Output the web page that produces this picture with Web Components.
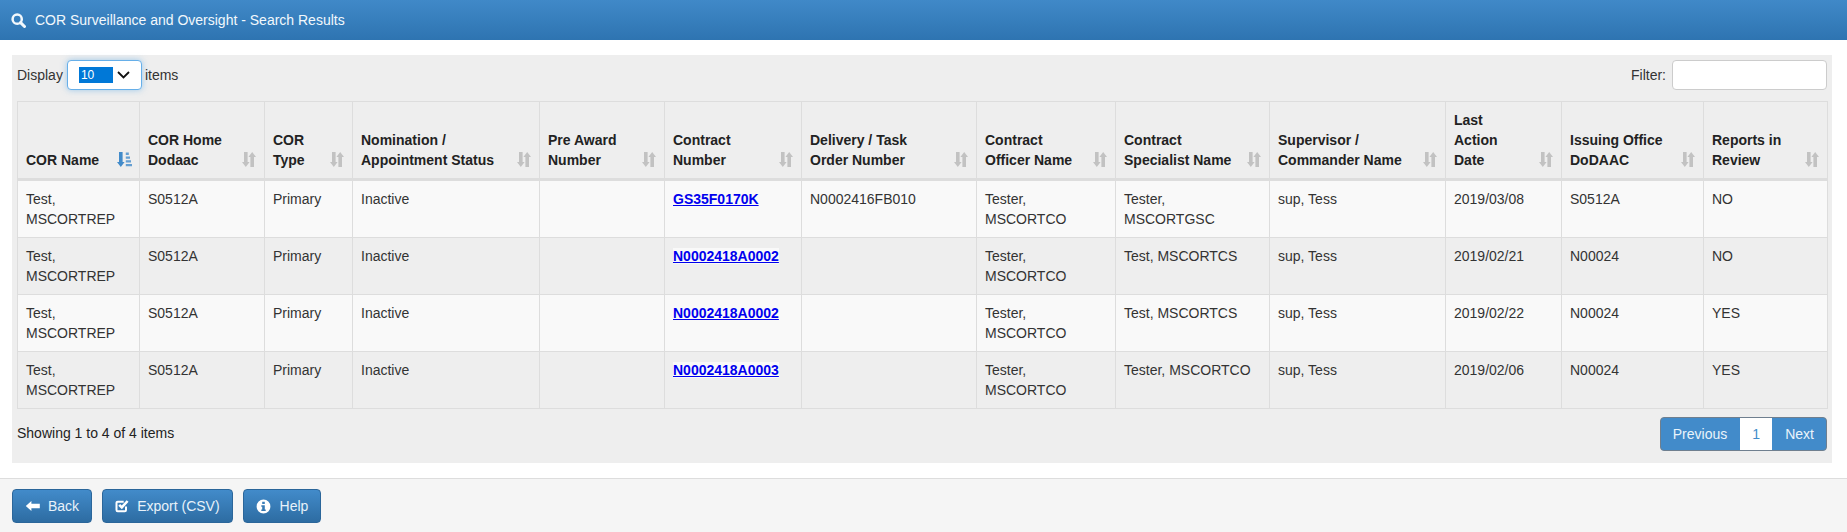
<!DOCTYPE html>
<html lang="en">
<head>
<meta charset="UTF-8">
<title>COR Surveillance and Oversight - Search Results</title>
<style>
  html, body { margin: 0; padding: 0; background: #fff; }
  body { font: 14px/20px "Liberation Sans", Arial, sans-serif; color: #222; width: 1847px; height: 532px; overflow: hidden; }
</style>
</head>
<body>
<title-bar>COR Surveillance and Oversight - Search Results</title-bar>
<results-panel></results-panel>
<action-bar>
  <action-button icon="back">Back</action-button>
  <action-button icon="check">Export (CSV)</action-button>
  <action-button icon="info">Help</action-button>
</action-bar>

<script>
const ICONS = {
  search: '<svg width="15" height="15" viewBox="0 0 15 15"><circle cx="6.2" cy="6.2" r="4.6" fill="none" stroke="currentColor" stroke-width="2.5"/><path d="M9.6 9.6l3.9 3.9" stroke="currentColor" stroke-width="3" stroke-linecap="round"/></svg>',
  back: '<svg width="15" height="14" viewBox="0 0 15 14"><path d="M6.4 2L.8 7l5.6 5V9.2H14.8V4.8H6.4z" fill="currentColor"/></svg>',
  check: '<svg width="14" height="14" viewBox="0 0 14 14"><path d="M11 7.6V11a1.2 1.2 0 0 1-1.2 1.2H2.7A1.2 1.2 0 0 1 1.5 11V3.9a1.2 1.2 0 0 1 1.2-1.2h6" fill="none" stroke="currentColor" stroke-width="2"/><path d="M4.2 5.8l2.6 2.6L12.6 2" fill="none" stroke="currentColor" stroke-width="2.6"/></svg>',
  info: '<svg width="15" height="15" viewBox="0 0 15 15"><path fill="currentColor" fill-rule="evenodd" d="M7.5.6a6.9 6.9 0 1 1 0 13.8a6.9 6.9 0 0 1 0-13.8zM6.2 2.8v2.3h2.6V2.8zM5.3 6.2v1.5h.9v2.9H5.3V12h4.4v-1.4h-.9V6.2z"/></svg>',
  sortBoth: '<svg width="14" height="15" viewBox="0 0 14 15"><path d="M2 0h3.6v10h2L3.8 15 0 10h2z" fill="currentColor"/><path d="M8.4 15V5h-2L10.2 0 14 5h-2v10z" fill="currentColor"/></svg>',
  sortAsc: '<svg width="15" height="15" viewBox="0 0 15 15"><path d="M2 0h3.6v10h2L3.8 15 0 10h2z" fill="currentColor"/><path d="M8.8.6h3v2.3h-3zM8.8 4.4h4.2v2.3H8.8zM8.8 8.2h5.2v2.3H8.8zM8.8 12H15v2.3H8.8z" fill="currentColor" opacity=".8"/></svg>'
};

class TitleBar extends HTMLElement {
  constructor() {
    super();
    this.attachShadow({mode: 'open'}).innerHTML = `
      <style>
        :host { display: flex; align-items: center; gap: 9px; height: 40px; padding: 0 11px; box-sizing: border-box;
          background: linear-gradient(#4089c8, #2e74b1); color: #f2f8fc; }
      </style>
      ${ICONS.search}<slot></slot>`;
  }
}
customElements.define('title-bar', TitleBar);

class SortIcon extends HTMLElement {
  constructor() {
    super();
    this.attachShadow({mode: 'open'});
  }
  connectedCallback() {
    const active = this.hasAttribute('active');
    this.shadowRoot.innerHTML = `
      <style>
        :host { display: block; flex: none; height: 15px; color: ${active ? '#428bca' : '#c2c2c2'}; margin: 0 ${active ? '-1px' : '0'} 3px 0; }
        svg { display: block; }
      </style>
      ${active ? ICONS.sortAsc : ICONS.sortBoth}`;
  }
}
customElements.define('sort-icon', SortIcon);

class ResultsTable extends HTMLElement {
  constructor() {
    super();
    this.attachShadow({mode: 'open'});
    this.columns = [
      ['COR Name', 122], ['COR Home<br>Dodaac', 125], ['COR<br>Type', 88], ['Nomination /<br>Appointment Status', 187],
      ['Pre Award<br>Number', 125], ['Contract<br>Number', 137], ['Delivery / Task<br>Order Number', 175],
      ['Contract<br>Officer Name', 139], ['Contract<br>Specialist Name', 154], ['Supervisor /<br>Commander Name', 176],
      ['Last<br>Action<br>Date', 116], ['Issuing Office<br>DoDAAC', 142], ['Reports in<br>Review', 124]
    ];
    const rep = 'Test, MSCORTREP', co = 'Tester, MSCORTCO';
    this.rows = [
      [rep, 'S0512A', 'Primary', 'Inactive', '', 'GS35F0170K', 'N0002416FB010', co, 'Tester,<br>MSCORTGSC', 'sup, Tess', '2019/03/08', 'S0512A', 'NO'],
      [rep, 'S0512A', 'Primary', 'Inactive', '', 'N0002418A0002', '', co, 'Test, MSCORTCS', 'sup, Tess', '2019/02/21', 'N00024', 'NO'],
      [rep, 'S0512A', 'Primary', 'Inactive', '', 'N0002418A0002', '', co, 'Test, MSCORTCS', 'sup, Tess', '2019/02/22', 'N00024', 'YES'],
      [rep, 'S0512A', 'Primary', 'Inactive', '', 'N0002418A0003', '', co, 'Tester, MSCORTCO', 'sup, Tess', '2019/02/06', 'N00024', 'YES']
    ];
  }
  connectedCallback() {
    const cols = this.columns.map(c => `<col style="width:${c[1]}px">`).join('');
    const head = this.columns.map((c, i) => `
      <th><div class="th"><span>${c[0]}</span><sort-icon ${i === 0 ? 'active' : ''}></sort-icon></div></th>`).join('');
    const body = this.rows.map(r => `<tr>${r.map((v, i) =>
      `<td>${i === 5 ? `<a href="#">${v}</a>` : v}</td>`).join('')}</tr>`).join('');
    this.shadowRoot.innerHTML = `
      <style>
        :host { display: block; }
        table { border-collapse: collapse; table-layout: fixed; width: 1810px; }
        th, td { border: 1px solid #ddd; padding: 8px; vertical-align: top; text-align: left; font-size: 14px; line-height: 20px; }
        th { vertical-align: bottom; border-bottom: 3px solid #ddd; background: #eee; color: #222; height: 60px; }
        .th { display: flex; justify-content: space-between; align-items: flex-end; white-space: nowrap; }
        td { height: 40px; }
        tr:nth-child(odd) td { background: #f9f9f9; }
        tr:nth-child(even) td { background: #eee; }
        a { color: #0000ee; font-weight: bold; text-decoration: underline; background: #f9f9f9; }
      </style>
      <table>
        <colgroup>${cols}</colgroup>
        <thead><tr>${head}</tr></thead>
        <tbody>${body}</tbody>
      </table>`;
  }
}
customElements.define('results-table', ResultsTable);

class PageNav extends HTMLElement {
  constructor() {
    super();
    this.attachShadow({mode: 'open'}).innerHTML = `
      <style>
        :host { display: flex; height: 34px; box-sizing: border-box; border: 1px solid #6f7f8f; border-radius: 4px; overflow: hidden; background: #428bca; color: #eaf4fb; }
        span { padding: 0 12px; line-height: 32px; }
        .prev { padding-right: 13px; }
        .next { padding-left: 13px; }
        .cur { width: 32px; box-sizing: border-box; padding: 0; text-align: center; background: #fff; color: #428bca; }
      </style>
      <span class="prev">Previous</span><span class="cur">1</span><span class="next">Next</span>`;
  }
}
customElements.define('page-nav', PageNav);

class ResultsPanel extends HTMLElement {
  constructor() {
    super();
    this.attachShadow({mode: 'open'}).innerHTML = `
      <style>
        :host { display: block; margin: 15px 15px 0 12px; height: 408px; padding: 5px 5px 0; box-sizing: border-box; background: #eee; color: #333; }
        .top { display: flex; align-items: center; justify-content: space-between; height: 30px; margin-bottom: 11px; }
        .group { display: flex; align-items: center; gap: 4px; }
        .select { display: flex; align-items: center; gap: 4px; width: 75px; height: 30px; padding: 0 0 0 11px; box-sizing: border-box; margin-right: -1px;
          background: #fff; border: 1px solid #66afe9; border-radius: 4px; box-shadow: 0 0 6px rgba(102,175,233,.6); }
        .select b { display: block; width: 34px; height: 16px; padding-left: 2px; box-sizing: border-box; background: #0078d7; color: #fff; font: 12px/16px "Liberation Sans", Arial, sans-serif; }
        .filter { width: 155px; height: 30px; margin-left: 2px; box-sizing: border-box; background: #fff; border: 1px solid #ccc; border-radius: 4px; }
        .bottom { display: flex; justify-content: space-between; margin-top: 8px; }
        .info { padding-top: 6px; color: #222; }
      </style>
      <div class="top">
        <div class="group">Display
          <div class="select"><b>10</b><svg width="13" height="8" viewBox="0 0 13 8"><path d="M1 1l5.5 5.5L12 1" fill="none" stroke="#111" stroke-width="1.8"/></svg></div>
          items</div>
        <div class="group">Filter: <div class="filter"></div></div>
      </div>
      <results-table></results-table>
      <div class="bottom">
        <div class="info">Showing 1 to 4 of 4 items</div>
        <page-nav></page-nav>
      </div>`;
  }
}
customElements.define('results-panel', ResultsPanel);

class ActionBar extends HTMLElement {
  constructor() {
    super();
    this.attachShadow({mode: 'open'}).innerHTML = `
      <style>
        :host { display: flex; gap: 10px; margin-top: 15px; height: 54px; padding: 10px 12px 0; box-sizing: border-box; background: #f5f5f5; border-top: 1px solid #ddd; }
      </style>
      <slot></slot>`;
  }
}
customElements.define('action-bar', ActionBar);

class ActionButton extends HTMLElement {
  constructor() {
    super();
    this.attachShadow({mode: 'open'});
  }
  connectedCallback() {
    const gap = this.getAttribute('icon') === 'info' ? 9 : 8;
    this.shadowRoot.innerHTML = `
      <style>
        :host { display: flex; align-items: center; gap: ${gap}px; height: 34px; padding: 0 12px; box-sizing: border-box;
          background: linear-gradient(#428bca, #2d6ca2); border: 1px solid #2b669a; border-radius: 4px; color: #e8f2fa; }
        svg { display: block; flex: none; color: #fff; }
      </style>
      ${ICONS[this.getAttribute('icon')]}<slot></slot>`;
  }
}
customElements.define('action-button', ActionButton);
</script>
</body>
</html>
